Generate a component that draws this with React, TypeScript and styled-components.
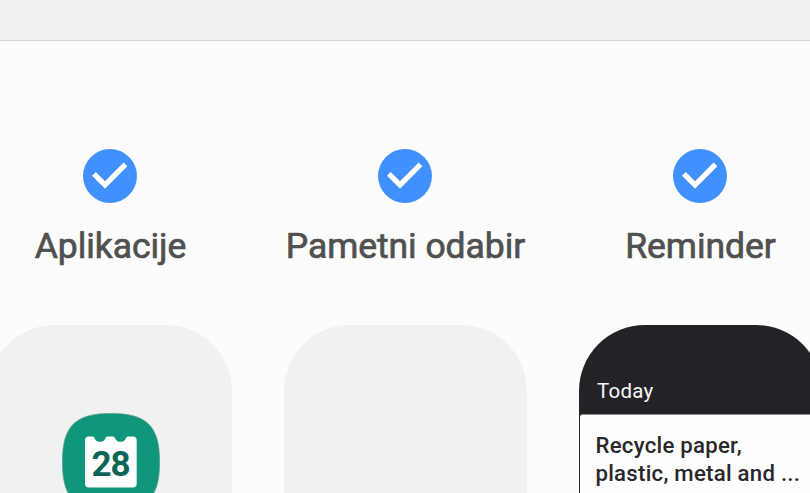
import React from "react";
import styled, { createGlobalStyle } from "styled-components";

const GlobalStyle = createGlobalStyle`
  * { box-sizing: border-box; }
  body {
    margin: 0;
    background: #fcfcfc;
    font-family: Roboto, "Liberation Sans", sans-serif;
    overflow: hidden;
  }
`;

const Page = styled.main`
  width: 100vw;
  height: 100vh;
  overflow: hidden;
  background: #fcfcfc;
`;

const TopBar = styled.header`
  height: 41px;
  background: #f1f1f1;
  border-bottom: 1px solid #d4d4d4;
`;

const Panels = styled.div`
  display: grid;
  grid-template-columns: repeat(3, 243px);
  column-gap: 52px;
  margin-left: -11px;
  padding-top: 108px;
`;

const Panel = styled.section`
  display: flex;
  flex-direction: column;
  align-items: center;
`;

const Check = styled.svg`
  display: block;
  width: 54px;
  height: 54px;
  margin-right: 1px;
`;

const Label = styled.h2`
  margin: 22px 0 0;
  height: 42px;
  color: #505050;
  font-size: 35.5px;
  font-weight: 400;
  line-height: 42px;
  letter-spacing: -0.07px;
  white-space: nowrap;
  -webkit-text-stroke: 0.7px #505050;
`;

const Preview = styled.div<{ $dark?: boolean }>`
  width: 243px;
  height: 620px;
  margin-top: 58px;
  border-radius: 66px;
  overflow: hidden;
  background: ${(p) => (p.$dark ? "#242226" : "#f1f1f1")};
`;

const AppIcon = styled.svg`
  display: block;
  width: 98px;
  height: 98px;
  margin: 88px auto 0 73px;
`;

const DayNumber = styled.text`
  font-family: Roboto, sans-serif;
  font-size: 35px;
  font-weight: 700;
  letter-spacing: -1.2px;
  fill: #0b6658;
`;

const Today = styled.div`
  height: 90px;
  padding: 54px 0 0 18px;
  color: #f7f7f7;
  font-size: 20.5px;
  line-height: 24px;
  letter-spacing: 0.25px;
`;

const ReminderCard = styled.div`
  height: 500px;
  margin: -1px 0 0 1px;
  padding: 16px 0 0 15.5px;
  border-top: 1px solid #8d8c8e;
  border-top-left-radius: 3px;
  background: #fefefe;
  color: #29272a;
  font-size: 22.2px;
  font-weight: 500;
  line-height: 28px;
  letter-spacing: 0.25px;
  white-space: nowrap;
`;

const CheckMark = () => (
  <Check viewBox="0 0 54 54" aria-hidden="true">
    <circle cx="27" cy="27" r="27" fill="#4190ff" />
    <path d="M9 26.7 12.8 22.9 22 32.2 40.6 13.4 44.4 17.2 22 39.8Z" fill="#fff" />
  </Check>
);

const CalendarIcon = () => (
  <AppIcon viewBox="0 0 98 98" role="img" aria-label="Calendar">
    <path
      d="M49 .4C85 .4 97.6 13 97.6 49S85 97.6 49 97.6.4 85 .4 49 13 .4 49 .4Z"
      fill="#10967a"
      stroke="#579886"
      strokeWidth=".7"
    />
    <path
      d="M27 23.4h3.5q1.6 0 2 1.8a6 6 0 0 0 11 0q.4-1.8 2-1.8h5.5q1.6 0 2 1.8a6 6 0 0 0 11 0q.4-1.8 2-1.8h4.7a4 4 0 0 1 4 4v43.2a4 4 0 0 1-4 4H27a4 4 0 0 1-4-4V27.4a4 4 0 0 1 4-4Z"
      fill="#fff"
    />
    <DayNumber x="29.5" y="62.9">28</DayNumber>
  </AppIcon>
);

export default function App() {
  return (
    <Page>
      <GlobalStyle />
      <TopBar />
      <Panels>
        <Panel>
          <CheckMark />
          <Label>Aplikacije</Label>
          <Preview>
            <CalendarIcon />
          </Preview>
        </Panel>
        <Panel>
          <CheckMark />
          <Label>Pametni odabir</Label>
          <Preview />
        </Panel>
        <Panel>
          <CheckMark />
          <Label>Reminder</Label>
          <Preview $dark>
            <Today>Today</Today>
            <ReminderCard>
              Recycle paper,
              <br />
              plastic, metal and ...
            </ReminderCard>
          </Preview>
        </Panel>
      </Panels>
    </Page>
  );
}
